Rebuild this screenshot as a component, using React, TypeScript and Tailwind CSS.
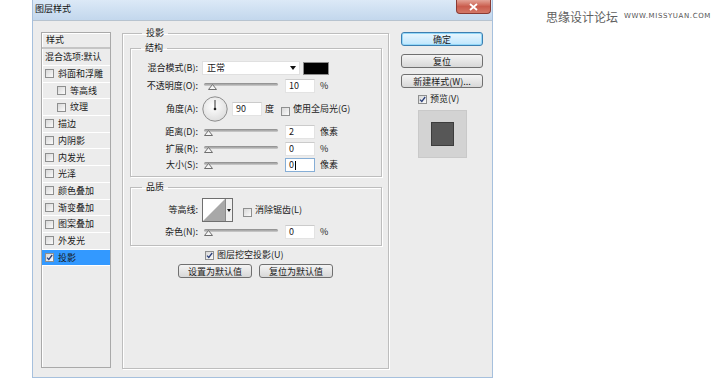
import React from "react";

const CJK = "font-['Noto_Sans_CJK_SC','Noto_Sans_CJK_JP',sans-serif]";

function Check({ on }: { on?: boolean }) {
  return (
    <span className="inline-flex h-[9px] w-[9px] shrink-0 items-center justify-center border border-[#8e8f8f] bg-gradient-to-br from-[#d8d8d8] to-[#fbfbfb]">
      {on && (
        <svg viewBox="0 0 7 7" className="h-[7px] w-[7px]">
          <path d="M1 3.6 L2.8 5.4 L6.2 1" fill="none" stroke="#2b3f7a" strokeWidth="1.3" />
        </svg>
      )}
    </span>
  );
}

function Slider({ shifted }: { shifted?: boolean }) {
  return (
    <div className="relative ml-[6px] h-[14px] w-[74px]">
      <div className="absolute left-0 right-0 top-[4px] h-[3px] rounded-full bg-gradient-to-b from-[#8a8a8a] to-[#cfcfcf]" />
      <svg
        className={`absolute top-[5px] ${shifted ? "left-[4px]" : "left-[0px]"}`}
        width="9"
        height="6"
        viewBox="0 0 9 6"
      >
        <path d="M0.5 5.5 L4.5 0.5 L8.5 5.5 Z" fill="#f5f5f5" stroke="#6e6e6e" />
      </svg>
    </div>
  );
}

function Field({ v, focus, className = "" }: { v: string; focus?: boolean; className?: string }) {
  return (
    <div
      className={`flex h-[14px] w-[30px] items-center border bg-white pl-[3px] text-[9px] ${
        focus ? "border-[#86aed6]" : "border-[#e3e3e3] border-t-[#cbcbcb]"
      } ${className}`}
    >
      {v}
      {focus && <span className="ml-px h-[9px] w-px bg-black" />}
    </div>
  );
}

function Label({ t }: { t: string }) {
  return <div className="w-[67px] shrink-0 text-right text-[9px] leading-[14px]">{t}</div>;
}

function SliderRow({ label, v, unit, shifted, focus, className = "" }: { label: string; v: string; unit: string; shifted?: boolean; focus?: boolean; className?: string }) {
  return (
    <div className={`flex h-[14px] items-center ${className}`}>
      <Label t={label} />
      <Slider shifted={shifted} />
      <Field v={v} focus={focus} className="ml-[7px]" />
      <span className="ml-[5px] text-[9px]">{unit}</span>
    </div>
  );
}

function Btn({ children, def, className = "" }: { children: React.ReactNode; def?: boolean; className?: string }) {
  return (
    <div
      className={`flex h-[14px] items-center justify-center rounded-[3px] border text-[9px] leading-none ${
        def
          ? "border-[#3c7fb1] bg-gradient-to-b from-[#eaf6fd] to-[#bee6fd] shadow-[inset_0_0_0_1px_#94d8f8]"
          : "border-[#707070] bg-gradient-to-b from-[#f4f4f4] to-[#d8d8d8]"
      } ${className}`}
    >
      {children}
    </div>
  );
}

const group =
  "border border-[#bdbdbd] shadow-[inset_1px_1px_0_#fff,1px_1px_0_#fff]";

const styles: { t: string; sub?: boolean; on?: boolean }[] = [
  { t: "斜面和浮雕" },
  { t: "等高线", sub: true },
  { t: "纹理", sub: true },
  { t: "描边" },
  { t: "内阴影" },
  { t: "内发光" },
  { t: "光泽" },
  { t: "颜色叠加" },
  { t: "渐变叠加" },
  { t: "图案叠加" },
  { t: "外发光" },
  { t: "投影", on: true },
];

export default function App() {
  return (
    <div className={`flex h-[391px] w-[720px] bg-white text-[#1a1a1a] ${CJK}`}>
      {/* dialog window */}
      <div className="ml-[32px] flex h-[378px] w-[461px] flex-col border-x border-b border-[#a6c0dd]">
        {/* title bar */}
        <div className="flex h-[20px] items-start bg-gradient-to-b from-[#dce9f7] via-[#cfe0f2] to-[#c3d7ed]">
          <span className="ml-[2px] mt-[3px] text-[9px] leading-[12px] text-[#111]">图层样式</span>
          <div className="ml-auto mr-px flex h-[14px] w-[35px] items-center justify-center rounded-b-[4px] border border-t-0 border-[#8a3a33] bg-gradient-to-b from-[#e3a397] via-[#c95c4d] to-[#d37767]">
            <svg width="9" height="8" viewBox="0 0 9 8">
              <path d="M1 1 L8 7 M8 1 L1 7" stroke="#fff" strokeWidth="1.8" />
            </svg>
          </div>
        </div>

        {/* body */}
        <div className="flex flex-1 items-start border-t border-[#b7c3cf] bg-[#ececec] pl-[8px] pr-[8px]">
          {/* style list */}
          <div className="mt-[11px] flex h-[336px] w-[70px] shrink-0 flex-col border border-[#a9a9a9] text-[9px] shadow-[inset_1px_1px_0_#fff]">
            <div className="flex h-[16px] shrink-0 items-center border-b-2 border-[#c5c5c5] pl-[4px]">样式</div>
            <div className="flex h-[17px] shrink-0 items-center border-b border-white pl-[3px]">混合选项:默认</div>
            {styles.map((s) => (
              <div
                key={s.t}
                className={`flex h-[16.7px] shrink-0 items-center gap-[4px] border-b border-white ${
                  s.sub ? "pl-[15px]" : "pl-[3px]"
                } ${s.on ? "bg-[#3399ff]" : ""}`}
              >
                <Check on={s.on} />
                <span>{s.t}</span>
              </div>
            ))}
          </div>

          {/* main group */}
          <fieldset className={`ml-[11px] mt-[5px] h-[343px] w-[267px] shrink-0 pl-[7px] pr-[6px] ${group}`}>
            <legend className="ml-[12px] px-[4px] text-[9px] leading-[14px]">投影</legend>

            <fieldset className={`mt-px pb-[4px] pt-[6px] ${group}`}>
              <legend className="ml-[10px] px-[4px] text-[9px] leading-[14px]">结构</legend>

              <div className="flex h-[14px] items-center">
                <Label t="混合模式(B):" />
                <div className="ml-[4px] flex h-[14px] w-[98px] items-center border border-[#e0e0e0] bg-white pl-[4px] text-[9px]">
                  正常
                  <svg className="ml-auto mr-[3px]" width="6" height="4" viewBox="0 0 6 4">
                    <path d="M0 0 H6 L3 4 Z" fill="#111" />
                  </svg>
                </div>
                <div className="ml-[3px] h-[13px] w-[26px] border border-[#8c8c8c] bg-black" />
              </div>

              <SliderRow className="mt-[4px]" label="不透明度(O):" v="10" unit="%" shifted />

              <div className="mt-[3px] flex h-[25px] items-center">
                <Label t="角度(A):" />
                <svg className="ml-[4px]" width="26" height="26" viewBox="0 0 26 26">
                  <defs>
                    <radialGradient id="dial" cx="45%" cy="40%" r="60%">
                      <stop offset="0%" stopColor="#ffffff" />
                      <stop offset="100%" stopColor="#dedede" />
                    </radialGradient>
                  </defs>
                  <circle cx="13" cy="13" r="12.2" fill="url(#dial)" stroke="#8d8d8d" />
                  <path d="M13 13 V4" stroke="#333" strokeWidth="1" />
                  <circle cx="13" cy="13" r="1.3" fill="#222" />
                </svg>
                <Field v="90" className="ml-[4px]" />
                <span className="ml-[3px] text-[9px]">度</span>
                <span className="ml-[7px]">
                  <Check />
                </span>
                <span className="ml-[3px] text-[9px]">使用全局光(G)</span>
              </div>

              <SliderRow className="mt-[4px]" label="距离(D):" v="2" unit="像素" />
              <SliderRow className="mt-[3px]" label="扩展(R):" v="0" unit="%" />
              <SliderRow className="mt-[2px]" label="大小(S):" v="0" unit="像素" focus />
            </fieldset>

            <fieldset className={`mt-[3px] pb-[6px] pt-[4px] ${group}`}>
              <legend className="ml-[11px] px-[4px] text-[9px] leading-[14px]">品质</legend>

              <div className="flex h-[24px] items-center">
                <Label t="等高线:" />
                <div className="ml-[4px] flex h-[24px] w-[31px] border border-[#6f6f6f] bg-white">
                  <svg width="22" height="22" viewBox="0 0 22 22">
                    <path d="M0 22 L22 0 V22 Z" fill="#a8a8a8" />
                  </svg>
                  <div className="flex flex-1 items-center justify-center border-l border-[#8a8a8a] bg-[#f0f0f0]">
                    <svg width="4" height="3" viewBox="0 0 4 3">
                      <path d="M0 0 H4 L2 3 Z" fill="#111" />
                    </svg>
                  </div>
                </div>
                <span className="ml-[10px]">
                  <Check />
                </span>
                <span className="ml-[3px] text-[9px]">消除锯齿(L)</span>
              </div>

              <SliderRow className="mt-[3px]" label="杂色(N):" v="0" unit="%" />
            </fieldset>

            <div className="ml-[75px] mt-[3px] flex h-[12px] items-center gap-[3px] text-[9px]">
              <Check on />
              <span>图层挖空投影(U)</span>
            </div>

            <div className="ml-[48px] mt-[3px] flex gap-[7px]">
              <Btn className="w-[74px]">设置为默认值</Btn>
              <Btn className="w-[74px]">复位为默认值</Btn>
            </div>
          </fieldset>

          {/* right column */}
          <div className="ml-[12px] mt-[11px] flex w-[82px] shrink-0 flex-col">
            <Btn def>确定</Btn>
            <Btn className="mt-[8px]">复位</Btn>
            <Btn className="mt-[6px]">新建样式(W)...</Btn>
            <div className="ml-[17px] mt-[6px] flex h-[10px] items-center gap-[3px] text-[9px]">
              <Check on />
              <span>预览(V)</span>
            </div>
            <div className="ml-[17px] mt-[6px] flex h-[48px] w-[49px] items-center justify-center border border-[#c9c9c9] bg-[#d3d3d3]">
              <div className="h-[24px] w-[23px] border border-[#3c3c3c] bg-[#575757]" />
            </div>
          </div>
        </div>
      </div>

      {/* watermark */}
      <div className="ml-[53px] mt-[8px] flex h-[17px] items-center">
        <span className="text-[12px] leading-none text-[#5f5f5f]">思缘设计论坛</span>
        <span className="ml-[6px] font-['DejaVu_Sans',sans-serif] text-[7px] leading-none tracking-[0.6px] text-[#555]">
          WWW.MISSYUAN.COM
        </span>
      </div>
    </div>
  );
}
